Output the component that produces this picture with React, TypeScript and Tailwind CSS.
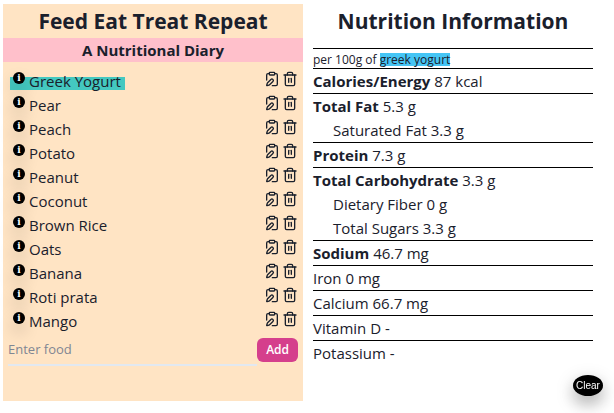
import { ClipboardPen, Trash2 } from "lucide-react";
import type { ReactNode } from "react";

const foods = [
  "Greek Yogurt",
  "Pear",
  "Peach",
  "Potato",
  "Peanut",
  "Coconut",
  "Brown Rice",
  "Oats",
  "Banana",
  "Roti prata",
  "Mango",
];

function FoodRow({ name, selected }: { name: string; selected: boolean }) {
  return (
    <li className="flex h-6 items-center">
      <div
        className={
          selected
            ? "flex h-6 bg-[linear-gradient(to_bottom,transparent_7px,#44c8c0_7px,#44c8c0_20px,transparent_20px)] pr-1 pl-[3px]"
            : "flex h-6 pr-1 pl-[3px]"
        }
      >
        <button
          type="button"
          aria-label={`Show nutrition of ${name}`}
          className="mt-0.5 mr-1 grid size-3 shrink-0 place-items-center rounded-full bg-black font-['DejaVu_Serif',serif] text-[9px] leading-3 font-bold text-white shadow-[0_8px_16px_rgba(0,0,0,0.2)]"
        >
          i
        </button>
        <span className="relative leading-[22px]">{name}</span>
      </div>
      <div className="ml-auto flex gap-0.5 pb-1.5">
        <button type="button" aria-label={`Edit ${name}`}>
          <ClipboardPen className="block size-4" />
        </button>
        <button type="button" aria-label={`Delete ${name}`}>
          <Trash2 className="block size-4" />
        </button>
      </div>
    </li>
  );
}

function Fact({ label, value, major }: { label: string; value: string; major?: boolean }) {
  return (
    <p className="leading-6">
      <span className={major ? "font-bold" : ""}>{label}</span> {value}
    </p>
  );
}

function Section({ children }: { children: ReactNode }) {
  return <div className="border-t border-black">{children}</div>;
}

export default function App() {
  return (
    <main className="flex gap-2.5 pt-1 pr-[21px] pl-[3px] font-['Open_Sans',sans-serif] text-[15px] text-[#1a202c]">
      <section className="flex-[15] bg-[#ffe4c4] pb-[35px]">
        <h1 className="text-center text-[21px] leading-[34px] font-bold">Feed Eat Treat Repeat</h1>
        <h2 className="bg-[#ffc0cb] text-center text-[15px] leading-6 font-bold">A Nutritional Diary</h2>
        <ul className="mt-2 pr-[5px] pl-[7px]">
          {foods.map((name, index) => (
            <FoodRow key={name} name={name} selected={index === 0} />
          ))}
        </ul>
        <form className="mt-1 flex items-start px-[5px]" onSubmit={(event) => event.preventDefault()}>
          <input
            type="text"
            aria-label="Food"
            placeholder="Enter food"
            className="h-7 min-w-0 flex-1 border-b-2 border-[#e2e8f0] bg-transparent pb-1 text-[13px] outline-none placeholder:text-[#7f8693]"
          />
          <button type="submit" className="h-6 rounded-md bg-[#d53f8c] px-[9px] text-xs font-semibold text-white">
            Add
          </button>
        </form>
      </section>

      <section className="flex-[14]">
        <h1 className="text-center text-[21px] leading-[34px] font-bold">Nutrition Information</h1>
        <div className="mt-2.5">
          <Section>
            <p className="pt-0.5 text-xs leading-[17px]">
              per 100g of{" "}
              <mark className="bg-[linear-gradient(to_bottom,transparent_2px,#45c5f5_2px,#45c5f5_15px,transparent_15px)] bg-transparent text-inherit">
                greek yogurt
              </mark>
            </p>
          </Section>
          <Section>
            <Fact label="Calories/Energy" value="87 kcal" major />
          </Section>
          <Section>
            <Fact label="Total Fat" value="5.3 g" major />
            <div className="pl-5">
              <Fact label="Saturated Fat" value="3.3 g" />
            </div>
          </Section>
          <Section>
            <Fact label="Protein" value="7.3 g" major />
          </Section>
          <Section>
            <Fact label="Total Carbohydrate" value="3.3 g" major />
            <div className="pl-5">
              <Fact label="Dietary Fiber" value="0 g" />
              <Fact label="Total Sugars" value="3.3 g" />
            </div>
          </Section>
          <Section>
            <Fact label="Sodium" value="46.7 mg" major />
          </Section>
          <Section>
            <Fact label="Iron" value="0 mg" />
          </Section>
          <Section>
            <Fact label="Calcium" value="66.7 mg" />
          </Section>
          <Section>
            <Fact label="Vitamin D" value="-" />
          </Section>
          <Section>
            <Fact label="Potassium" value="-" />
          </Section>
        </div>
      </section>

      <button
        type="button"
        className="fixed right-[11px] bottom-[17px] h-[21px] w-[30px] rounded-[50%] bg-black text-center font-['Liberation_Sans',sans-serif] text-[10px] text-white shadow-[0_8px_16px_rgba(0,0,0,0.2),0_6px_20px_rgba(0,0,0,0.19)]"
      >
        Clear
      </button>
    </main>
  );
}
